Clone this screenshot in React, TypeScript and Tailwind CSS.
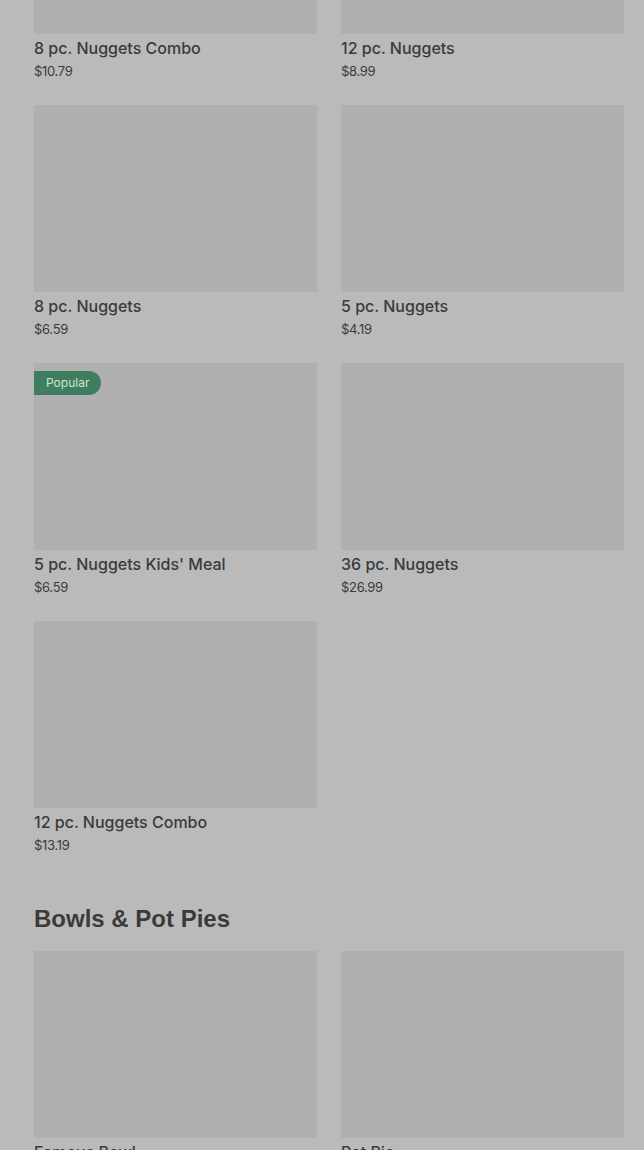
type Item = { name: string; price?: string; badge?: string };

const nuggets: Item[] = [
  { name: '8 pc. Nuggets Combo', price: '$10.79' },
  { name: '12 pc. Nuggets', price: '$8.99' },
  { name: '8 pc. Nuggets', price: '$6.59' },
  { name: '5 pc. Nuggets', price: '$4.19' },
  { name: "5 pc. Nuggets Kids' Meal", price: '$6.59', badge: 'Popular' },
  { name: '36 pc. Nuggets', price: '$26.99' },
  { name: '12 pc. Nuggets Combo', price: '$13.19' },
];

const bowls: Item[] = [
  { name: 'Famous Bowl', price: '$7.49' },
  { name: 'Pot Pie', price: '$7.29' },
];

function MenuCard({ item }: { item: Item }) {
  return (
    <div className="flex flex-col">
      <div className="relative h-[187px] w-full bg-[#b0b0b0]">
        {item.badge && (
          <span className="absolute left-0 top-2 flex h-6 items-center rounded-r-full bg-[#3f7f5f] pl-3 pr-3 text-[12px] text-[#d3e3d8]">
            {item.badge}
          </span>
        )}
      </div>
      <p className="mt-1 text-[16px] font-medium leading-5 text-[#3a3a3a]">{item.name}</p>
      {item.price && (
        <p className="mt-1 text-[13px] leading-[18px] tracking-[-0.3px] text-[#3a3a3a]">{item.price}</p>
      )}
    </div>
  );
}

export default function App() {
  return (
    <div
      className="h-[1150px] overflow-hidden bg-[#bababa] pl-[34px] pr-5"
      style={{ fontFamily: 'Inter, Roboto, sans-serif' }}
    >
      <div className="-mt-[153px] grid grid-cols-2 gap-x-6 gap-y-[25px]">
        {nuggets.map((item) => (
          <MenuCard key={item.name} item={item} />
        ))}
      </div>

      <h2
        className="mt-[51px] text-[24px] font-bold leading-7 text-[#3a3a3a]"
        style={{ fontFamily: '"Liberation Sans", Arial, sans-serif' }}
      >
        Bowls &amp; Pot Pies
      </h2>
      <div className="mt-[18px] grid grid-cols-2 gap-x-6 gap-y-[25px]">
        {bowls.map((item) => (
          <MenuCard key={item.name} item={item} />
        ))}
      </div>
    </div>
  );
}
